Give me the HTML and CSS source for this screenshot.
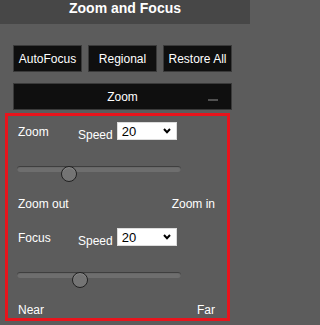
FILE: index.html
```html
<!DOCTYPE html>
<html>
<head>
<meta charset="utf-8">
<link rel="stylesheet" href="styles.css">
</head>
<body>
<div class="header">Zoom and Focus</div>
<div class="btn-row">
  <button class="btn">AutoFocus</button>
  <button class="btn">Regional</button>
  <button class="btn">Restore All</button>
</div>
<div class="zoombar">Zoom<span class="dash"></span></div>
<div class="panel">
  <div class="section">
    <div class="ctrl-row">
      <span class="name">Zoom</span>
      <span class="speed">Speed</span>
      <div class="select-wrap">
        <select class="sel"><option>20</option></select>
        <svg class="chev" viewBox="0 0 8 6"><polyline points="1,1 4,4.2 7,1" fill="none" stroke="#000" stroke-width="2"/></svg>
      </div>
    </div>
    <div class="slider"><div class="track"></div><div class="thumb" style="left:44px"></div></div>
    <div class="ends"><span>Zoom out</span><span>Zoom in</span></div>
  </div>
  <div class="section second">
    <div class="ctrl-row">
      <span class="name">Focus</span>
      <span class="speed">Speed</span>
      <div class="select-wrap">
        <select class="sel"><option>20</option></select>
        <svg class="chev" viewBox="0 0 8 6"><polyline points="1,1 4,4.2 7,1" fill="none" stroke="#000" stroke-width="2"/></svg>
      </div>
    </div>
    <div class="slider"><div class="track"></div><div class="thumb" style="left:55px"></div></div>
    <div class="ends"><span>Near</span><span>Far</span></div>
  </div>
</div>
</body>
</html>
```
FILE: styles.css
```css
body {
  margin: 0;
  width: 250px;
  height: 325px;
  overflow: hidden;
  background: #5c5c5c;
  color: #fff;
  font-family: "Liberation Sans", Arial, sans-serif;
  font-size: 12px;
}
.header {
  height: 24px;
  background: #474747;
  font-weight: bold;
  font-size: 14px;
  line-height: 17px;
  text-align: center;
}
.btn-row {
  display: flex;
  gap: 6px;
  margin: 21px 18px 0 13px;
}
.btn {
  flex: 1;
  height: 27px;
  margin: 0;
  padding: 0;
  box-sizing: border-box;
  background: #0f0f0f;
  border: 1px solid #3a3a3a;
  color: #fff;
  font: 12px "Liberation Sans", Arial, sans-serif;
  display: flex;
  align-items: center;
  justify-content: center;
}
.zoombar {
  position: relative;
  margin: 11px 18px 0 13px;
  height: 27px;
  box-sizing: border-box;
  background: #0f0f0f;
  border: 1px solid #3a3a3a;
  display: flex;
  align-items: center;
  justify-content: center;
}
.dash {
  position: absolute;
  right: 13px;
  bottom: 8px;
  width: 10px;
  height: 2px;
  background: #505050;
}
.panel {
  margin: 3px 0 0 5px;
  width: 225px;
  height: 208px;
  box-sizing: border-box;
  border: 3px solid #e8141c;
  padding: 6px 0 1px 0;
}
.section.second {
  margin-top: 17px;
}
.ctrl-row {
  display: flex;
  align-items: flex-start;
  height: 18px;
  padding-left: 10px;
}
.name {
  width: 60px;
  margin-top: 3px;
  line-height: 14px;
}
.speed {
  margin-top: 6px;
  margin-right: 4px;
  line-height: 14px;
}
.select-wrap {
  position: relative;
  width: 60px;
  height: 18px;
}
.sel {
  -webkit-appearance: none;
  appearance: none;
  display: block;
  width: 100%;
  height: 100%;
  margin: 0;
  box-sizing: border-box;
  border: 1px solid #dcdcdc;
  border-radius: 0;
  background: #fff;
  color: #000;
  font: 13px "Liberation Sans", Arial, sans-serif;
  padding: 0 0 0 4px;
  outline: none;
}
.chev {
  position: absolute;
  left: 46px;
  top: 6px;
  width: 8px;
  height: 6px;
  pointer-events: none;
}
.slider {
  position: relative;
  width: 164px;
  height: 16px;
  margin: 26px 0 0 9px;
}
.track {
  margin-top: 4px;
  height: 6px;
  border-radius: 3px;
  background: #6e6e6e;
  box-shadow: inset 0 1px 1px #3a3a3a;
}
.thumb {
  position: absolute;
  top: 0;
  width: 16px;
  height: 16px;
  box-sizing: border-box;
  border-radius: 50%;
  border: 1px solid #202020;
  background: #747474;
  box-shadow: inset 0 1px 1px #888;
}
.ends {
  display: flex;
  justify-content: space-between;
  margin: 15px 12px 0 10px;
  line-height: 14px;
}
```
